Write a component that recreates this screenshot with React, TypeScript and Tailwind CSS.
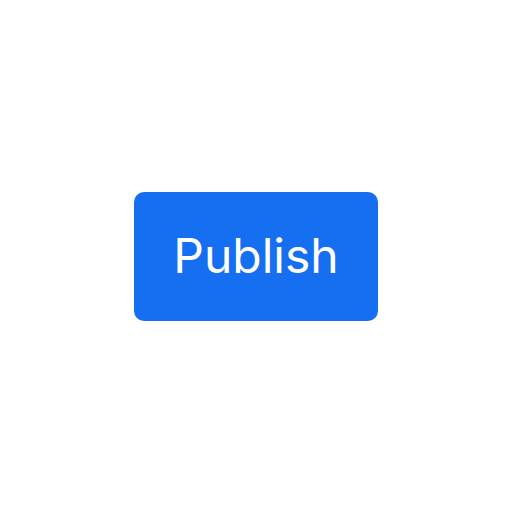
export default function App() {
  return (
    <main className="flex min-h-screen items-center justify-center bg-white" style={{ fontFamily: "Inter, 'Noto Sans', sans-serif" }}>
      <button
        type="button"
        className="flex h-[129px] w-[244px] items-center justify-center rounded-[10px] bg-[#166ff0] text-[48px] font-normal leading-none text-white"
      >
        Publish
      </button>
    </main>
  );
}
